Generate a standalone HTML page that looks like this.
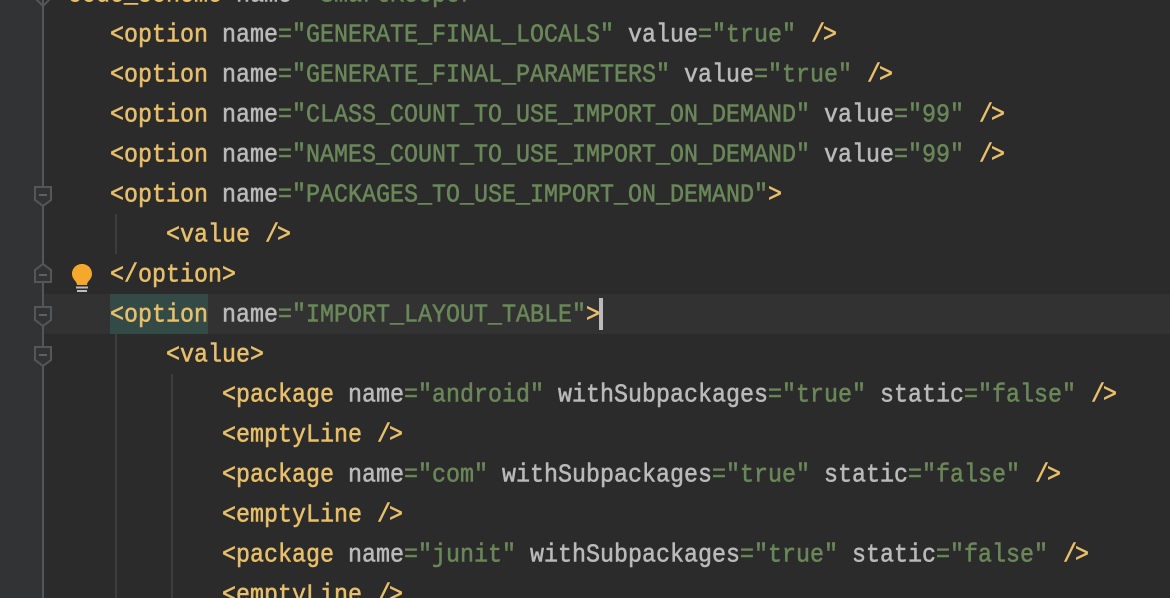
<!DOCTYPE html>
<html>
<head>
<meta charset="utf-8">
<style>
html,body{margin:0;padding:0;width:1170px;height:598px;overflow:hidden;background:#2b2b2b}
#w{position:absolute;left:0;top:0;width:1170px;height:598px;overflow:hidden;background:#2b2b2b}
#g{position:absolute;left:0;top:0;width:43px;height:598px;background:#313335}
#r{position:absolute;left:44px;top:294px;width:1126px;height:40px;background:#323232}
#h{position:absolute;left:110px;top:294px;width:98px;height:40px;background:#344a46}
#c{position:absolute;left:599px;top:298px;width:4px;height:32px;background:#bbb}
.v{position:absolute;width:2px;background:#3c3d3d}
.l{position:absolute;white-space:pre;height:40px;line-height:40px;margin:2px 0 0 0;font-family:"Liberation Mono",monospace;font-size:23.33px;color:#bababa;transform:scaleY(1.1);transform-origin:left center;-webkit-text-stroke:.5px currentColor}
.t{color:#e8bf6a}
.s{color:#6a8759}
.e{position:relative;left:1px;color:#e8bf6a}
.f{position:relative;left:-1px;color:#e8bf6a}
svg{position:absolute;left:0;top:0}
</style>
</head>
<body>
<div id="w">
<div id="g"></div>
<div id="r"></div>
<div id="h"></div>
<div class="v" style="left:115px;top:214px;height:40px"></div>
<div class="v" style="left:115px;top:334px;height:264px"></div>
<div class="v" style="left:171px;top:374px;height:224px"></div>

<div class="l" style="left:54px;top:-26px"><span class="t">&lt;code_scheme</span> name<span class="s">="SmartKeeper"</span><span class="t">&gt;</span></div>
<div class="l" style="left:110px;top:14px"><span class="t">&lt;option</span> name<span class="s">="GENERATE_FINAL_LOCALS"</span> value<span class="s">="true"</span> <span class="e">/</span><span class="f">&gt;</span></div>
<div class="l" style="left:110px;top:54px"><span class="t">&lt;option</span> name<span class="s">="GENERATE_FINAL_PARAMETERS"</span> value<span class="s">="true"</span> <span class="e">/</span><span class="f">&gt;</span></div>
<div class="l" style="left:110px;top:94px"><span class="t">&lt;option</span> name<span class="s">="CLASS_COUNT_TO_USE_IMPORT_ON_DEMAND"</span> value<span class="s">="99"</span> <span class="e">/</span><span class="f">&gt;</span></div>
<div class="l" style="left:110px;top:134px"><span class="t">&lt;option</span> name<span class="s">="NAMES_COUNT_TO_USE_IMPORT_ON_DEMAND"</span> value<span class="s">="99"</span> <span class="e">/</span><span class="f">&gt;</span></div>
<div class="l" style="left:110px;top:174px"><span class="t">&lt;option</span> name<span class="s">="PACKAGES_TO_USE_IMPORT_ON_DEMAND"</span><span class="t">&gt;</span></div>
<div class="l" style="left:166px;top:214px"><span class="t">&lt;value</span> <span class="e">/</span><span class="f">&gt;</span></div>
<div class="l" style="left:110px;top:254px"><span class="t">&lt;/option&gt;</span></div>
<div class="l" style="left:110px;top:294px"><span class="t">&lt;option</span> name<span class="s">="IMPORT_LAYOUT_TABLE"</span><span class="t">&gt;</span></div>
<div class="l" style="left:166px;top:334px"><span class="t">&lt;value&gt;</span></div>
<div class="l" style="left:222px;top:374px"><span class="t">&lt;package</span> name<span class="s">="android"</span> withSubpackages<span class="s">="true"</span> static<span class="s">="false"</span> <span class="e">/</span><span class="f">&gt;</span></div>
<div class="l" style="left:222px;top:414px"><span class="t">&lt;emptyLine</span> <span class="e">/</span><span class="f">&gt;</span></div>
<div class="l" style="left:222px;top:454px"><span class="t">&lt;package</span> name<span class="s">="com"</span> withSubpackages<span class="s">="true"</span> static<span class="s">="false"</span> <span class="e">/</span><span class="f">&gt;</span></div>
<div class="l" style="left:222px;top:494px"><span class="t">&lt;emptyLine</span> <span class="e">/</span><span class="f">&gt;</span></div>
<div class="l" style="left:222px;top:534px"><span class="t">&lt;package</span> name<span class="s">="junit"</span> withSubpackages<span class="s">="true"</span> static<span class="s">="false"</span> <span class="e">/</span><span class="f">&gt;</span></div>
<div class="l" style="left:222px;top:574px"><span class="t">&lt;emptyLine</span> <span class="e">/</span><span class="f">&gt;</span></div>

<div id="c"></div>

<svg width="1170" height="598" viewBox="0 0 1170 598" fill="none">
  <path d="M43 0V598" stroke="#555657" stroke-width="2"/>
  <path d="M34 -3L43 6L52 -3" stroke="#555657" stroke-width="2"/>
  <path d="M35 187H51V200L43 206L35 200Z" fill="#313335" stroke="#555657" stroke-width="2"/>
  <path d="M39 195H47" stroke="#5f6061" stroke-width="2"/>
  <path d="M35 282H51V270L43 264L35 270Z" fill="#313335" stroke="#555657" stroke-width="2"/>
  <path d="M39 275H47" stroke="#5f6061" stroke-width="2"/>
  <path d="M35 307H51V320L43 326L35 320Z" fill="#313335" stroke="#555657" stroke-width="2"/>
  <path d="M39 315H47" stroke="#5f6061" stroke-width="2"/>
  <path d="M35 347H51V360L43 366L35 360Z" fill="#313335" stroke="#555657" stroke-width="2"/>
  <path d="M39 355H47" stroke="#5f6061" stroke-width="2"/>
  <path d="M77 285C77 281 72 279.500 72 274C72 268 76.500 264 82 264C87.500 264 92 268 92 274C92 279.500 87 281 87 285Z" fill="#f4a92c"/>
  <rect x="76" y="286.500" width="12" height="2" fill="#bdbdbd"/>
  <rect x="77" y="290" width="10" height="2" fill="#bdbdbd"/>
</svg>
</div>
</body>
</html>
